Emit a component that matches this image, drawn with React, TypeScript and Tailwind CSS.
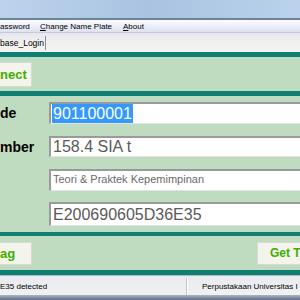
import React from "react";

const arial = { fontFamily: '"Liberation Sans", Arial, sans-serif' };

function Teal({ h }: { h: string }) {
  return <div className={`${h} w-full bg-[#0e7f72] shrink-0`} />;
}

function Field({ children, h }: { children: React.ReactNode; h: string }) {
  return (
    <div
      className={`${h} w-[260px] shrink-0 bg-white border-t-2 border-l-2 border-t-[#9a9a9a] border-l-[#9a9a9a] border-b border-b-[#e4e4e4] flex items-center pl-[1px] overflow-hidden`}
    >
      {children}
    </div>
  );
}

export default function App() {
  return (
    <div className="w-[300px] h-[300px] overflow-hidden flex flex-col bg-[#c0dcc0]">
      {/* title bar */}
      <div className="h-[18px] shrink-0 bg-gradient-to-r from-[#bcd3ec] via-[#a9c3e1] to-[#bad2eb]" />
      <div className="h-[2px] shrink-0 bg-[#6f8398]" />
      {/* menu bar */}
      <div
        className="h-[13px] shrink-0 bg-gradient-to-b from-[#fbfcfe] to-[#dde2f0] border-b border-[#c6c9d6] flex items-center pt-[2px] text-[8px] leading-none text-black whitespace-nowrap"
        style={arial}
      >
        <span className="w-[40px] shrink-0">assword</span>
        <span className="w-[83px] shrink-0">
          <span className="underline">C</span>hange Name Plate
        </span>
        <span>
          <span className="underline">A</span>bout
        </span>
      </div>
      {/* tab strip */}
      <div className="h-[19px] shrink-0 bg-gradient-to-b from-[#e6e7f0] via-[#f1f1ef] to-[#f3f3f1] flex items-end">
        <div
          className="h-[14px] w-[46px] border-r border-[#8c8c8c] flex items-center text-[8.5px] leading-none text-black mb-[2px] whitespace-nowrap"
          style={arial}
        >
          <span>base_Login</span>
        </div>
      </div>
      <Teal h="h-[5px]" />
      {/* connect panel */}
      <div className="h-[34px] shrink-0 flex items-center">
        <div className="h-[25px] w-[32px] bg-[#f4f4ec] border border-[#d6dcd4] border-l-0 flex items-center overflow-hidden">
          <span className="text-[13px] font-bold text-[#3fae00] leading-none" style={arial}>
            nect
          </span>
        </div>
      </div>
      <Teal h="h-[5px]" />
      {/* fields */}
      <div className="shrink-0 flex flex-col pt-[6px] pb-[6px]">
        <div className="flex items-center">
          <div className="w-[49px] shrink-0 text-[14px] font-bold text-black leading-none" style={arial}>
            de
          </div>
          <Field h="h-[22px]">
            <span className="bg-[#3399ff] text-white text-[16px] leading-[19px] px-[1px]" style={arial}>
              901100001
            </span>
          </Field>
        </div>
        <div className="flex items-center mt-[12px]">
          <div className="w-[49px] shrink-0 text-[14px] font-bold text-black leading-none" style={arial}>
            mber
          </div>
          <Field h="h-[21px]">
            <span className="text-[#5a5a5a] text-[16px] leading-none pl-[1px]" style={arial}>
              158.4 SIA t
            </span>
          </Field>
        </div>
        <div className="flex mt-[12px]">
          <div className="w-[49px] shrink-0" />
          <Field h="h-[22px] !items-start">
            <span className="text-[#6a6a6a] text-[11px] leading-none pl-[1px] pt-[3px]" style={arial}>
              Teori &amp; Praktek Kepemimpinan
            </span>
          </Field>
        </div>
        <div className="flex mt-[11px]">
          <div className="w-[49px] shrink-0" />
          <Field h="h-[24px]">
            <span className="text-[#5a5a5a] text-[16px] leading-none pl-[1px]" style={arial}>
              E200690605D36E35
            </span>
          </Field>
        </div>
      </div>
      <Teal h="h-[4px]" />
      {/* buttons panel */}
      <div className="h-[34px] shrink-0 flex items-center justify-between">
        <div className="h-[23px] w-[32px] bg-[#f4f4ec] border border-[#d6dcd4] border-l-0 flex items-center overflow-hidden">
          <span className="text-[13px] font-bold text-[#3fae00] leading-none" style={arial}>
            ag
          </span>
        </div>
        <div className="h-[23px] w-[43px] bg-[#f4f4ec] border border-[#d6dcd4] border-r-0 flex items-center overflow-hidden pl-[12px] whitespace-nowrap">
          <span className="text-[12px] font-bold text-[#3fae00] leading-none" style={arial}>
            Get T
          </span>
        </div>
      </div>
      <Teal h="h-[5px]" />
      {/* status bar */}
      <div
        className="h-[20px] shrink-0 bg-gradient-to-b from-[#e9ebf0] to-[#f1f1f1] border-t border-[#b5b8c0] flex items-end text-[8px] leading-none text-black whitespace-nowrap"
        style={arial}
      >
        <div className="w-[187px] h-[17px] border-r border-[#c2c4c8] flex items-center">E35 detected</div>
        <div className="flex-1 h-[17px] border-l border-[#ffffff] flex items-center pl-[14px] overflow-hidden">
          Perpustakaan Universitas I
        </div>
      </div>
      <div className="flex-1 bg-gradient-to-b from-[#aab6c8] to-[#5f7088]" />
    </div>
  );
}
